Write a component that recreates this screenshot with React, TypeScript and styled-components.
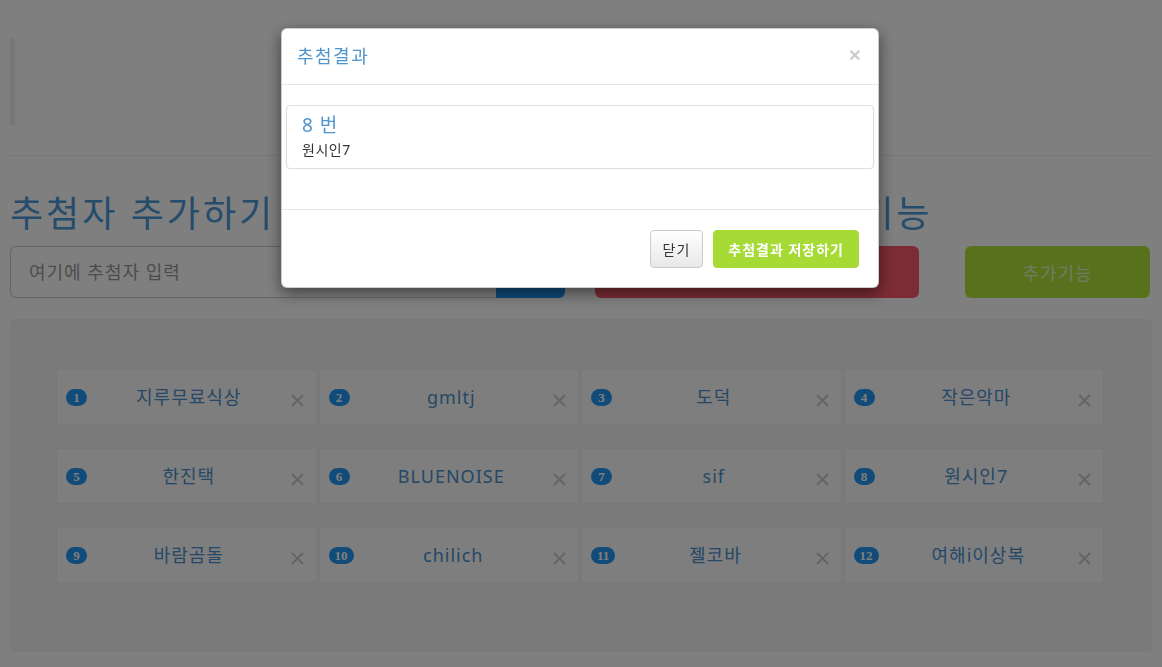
import styled, { createGlobalStyle } from "styled-components";

const GlobalStyle = createGlobalStyle`
  html, body {
    margin: 0;
    padding: 0;
    background: #fff;
    overflow: hidden;
  }

  * {
    box-sizing: border-box;
  }

  body {
    font-family: "Noto Sans", "Noto Sans CJK KR", sans-serif;
    color: #333;
  }
`;

const Page = styled.div`
  width: 1162px;
  height: 667px;
  padding: 38px 10px 0 10px;
`;

const Quote = styled.blockquote`
  margin: 0 0 30px 0;
  height: 87px;
  border-left: 5px solid #eee;
`;

const Rule = styled.hr`
  margin: 0 0 38px -2px;
  border: 0;
  border-top: 1px solid #eee;
`;

const TopRow = styled.div`
  display: flex;
  gap: 30px;
  margin-bottom: 21px;
`;

const Column = styled.div`
  width: 555px;
  display: flex;
  flex-direction: column;
`;

const Heading = styled.h1`
  margin: 0 0 12px 0;
  font-size: 36px;
  line-height: 40px;
  font-weight: 400;
  letter-spacing: 3px;
  color: #4a98d6;
  white-space: nowrap;
`;

const InputGroup = styled.div`
  display: flex;
  height: 52px;
`;

const NameInput = styled.input`
  flex: 1;
  height: 100%;
  padding: 0 18px;
  font-family: inherit;
  font-size: 18px;
  letter-spacing: 1px;
  border: 1px solid #ccc;
  border-right: 0;
  border-radius: 6px 0 0 6px;
  outline: none;

  &::placeholder {
    color: #999;
  }
`;

const AddButton = styled.button`
  width: 69px;
  height: 100%;
  border: 0;
  border-radius: 0 6px 6px 0;
  background: #2196f3;
  color: #fff;
  font-family: inherit;
  font-size: 18px;
`;

const ActionRow = styled.div`
  display: flex;
  justify-content: space-between;
  height: 52px;
`;

const ActionButton = styled.button<{ $tone: "red" | "green"; $w: number }>`
  width: ${(p) => p.$w}px;
  height: 100%;
  border: 0;
  border-radius: 6px;
  font-family: inherit;
  font-size: 18px;
  letter-spacing: 1px;
  background: ${(p) => (p.$tone === "red" ? "#f85868" : "#aee23a")};
  color: ${(p) => (p.$tone === "red" ? "#fff" : "rgba(255, 255, 255, 0.72)")};
`;

const Well = styled.div`
  width: 1142px;
  height: 333px;
  padding: 50px 0 0 46px;
  background: #f4f4f4;
  border-radius: 5px;
`;

const Grid = styled.div`
  width: 1048px;
  display: grid;
  grid-template-columns: repeat(4, 1fr);
  column-gap: 2px;
  row-gap: 23px;
`;

const Item = styled.div`
  height: 56px;
  display: flex;
  align-items: center;
  padding: 0 12px 0 9px;
  background: #fcfcfc;
  border: 1px solid #f0f0f0;
`;

const Badge = styled.span`
  display: inline-block;
  min-width: 21px;
  padding: 2px 6px;
  border-radius: 10px;
  background: #2196f3;
  color: #fff;
  font-family: "Liberation Serif", serif;
  font-weight: 700;
  font-size: 13px;
  line-height: 13px;
  text-align: center;
`;

const ItemName = styled.span`
  flex: 1;
  text-align: center;
  font-size: 18px;
  line-height: 24px;
  letter-spacing: 1px;
  color: #4a90cc;
`;

const RemoveIcon = styled.svg`
  width: 13px;
  height: 13px;
  margin-top: 6px;
  stroke: #c8c8c8;
  stroke-width: 2;
`;

const Backdrop = styled.div`
  position: fixed;
  inset: 0;
  background: rgba(0, 0, 0, 0.5);
`;

const Dialog = styled.div`
  position: absolute;
  top: 28px;
  left: 281px;
  width: 598px;
  background: #fff;
  border: 1px solid rgba(0, 0, 0, 0.2);
  border-radius: 6px;
  box-shadow: 0 5px 15px rgba(0, 0, 0, 0.5);
`;

const DialogHeader = styled.div`
  display: flex;
  justify-content: space-between;
  align-items: center;
  padding: 15px;
  border-bottom: 1px solid #e5e5e5;
`;

const DialogTitle = styled.h4`
  margin: 0;
  font-size: 18px;
  line-height: 25px;
  font-weight: 400;
  letter-spacing: 1.5px;
  color: #4f95cc;
`;

const CloseX = styled.span`
  margin: -4px 2px 0 0;
  font-family: "Liberation Sans", sans-serif;
  font-size: 21px;
  font-weight: 700;
  line-height: 1;
  color: #000;
  opacity: 0.2;
`;

const DialogBody = styled.div`
  padding: 20px 4px 40px;
`;

const ResultPanel = styled.div`
  padding: 8px 15px;
  border: 1px solid #ddd;
  border-radius: 4px;
`;

const ResultNumber = styled.div`
  font-size: 19px;
  line-height: 22px;
  letter-spacing: 1px;
  color: #4f95cc;
`;

const ResultName = styled.div`
  margin-top: 4px;
  font-size: 14px;
  line-height: 20px;
  letter-spacing: 0.5px;
  color: #333;
`;

const DialogFooter = styled.div`
  display: flex;
  justify-content: flex-end;
  gap: 10px;
  padding: 20px 19px 19px;
  border-top: 1px solid #e5e5e5;
`;

const FooterButton = styled.button<{ $primary?: boolean }>`
  height: 38px;
  padding: 0 ${(p) => (p.$primary ? 14 : 12)}px;
  border-radius: 4px;
  font-family: inherit;
  font-size: 14px;
  letter-spacing: 1px;
  border: 1px solid ${(p) => (p.$primary ? "#a6da34" : "#ccc")};
  background: ${(p) =>
    p.$primary ? "#a6da34" : "linear-gradient(#ffffff, #e8e8e8)"};
  color: ${(p) => (p.$primary ? "#fff" : "#333")};
  font-weight: ${(p) => (p.$primary ? 700 : 400)};
`;

const names = [
  "지루무료식상",
  "gmltj",
  "도덕",
  "작은악마",
  "한진택",
  "BLUENOISE",
  "sif",
  "원시인7",
  "바람곰돌",
  "chilich",
  "젤코바",
  "여해i이상복",
];

export default function App() {
  return (
    <>
      <GlobalStyle />
      <Page>
        <Quote />
        <Rule />
        <TopRow>
          <Column>
            <Heading>추첨자 추가하기</Heading>
            <InputGroup>
              <NameInput placeholder="여기에 추첨자 입력" />
              <AddButton>추가</AddButton>
            </InputGroup>
          </Column>
          <Column>
            <Heading>추첨하기와 추가기능</Heading>
            <ActionRow>
              <ActionButton $tone="red" $w={324}>
                추첨하기
              </ActionButton>
              <ActionButton $tone="green" $w={185}>
                추가기능
              </ActionButton>
            </ActionRow>
          </Column>
        </TopRow>
        <Well>
          <Grid>
            {names.map((name, i) => (
              <Item key={name}>
                <Badge>{i + 1}</Badge>
                <ItemName>{name}</ItemName>
                <RemoveIcon viewBox="0 0 13 13">
                  <line x1="1" y1="1" x2="12" y2="12" />
                  <line x1="12" y1="1" x2="1" y2="12" />
                </RemoveIcon>
              </Item>
            ))}
          </Grid>
        </Well>
      </Page>
      <Backdrop>
        <Dialog>
          <DialogHeader>
            <DialogTitle>추첨결과</DialogTitle>
            <CloseX>×</CloseX>
          </DialogHeader>
          <DialogBody>
            <ResultPanel>
              <ResultNumber>8 번</ResultNumber>
              <ResultName>원시인7</ResultName>
            </ResultPanel>
          </DialogBody>
          <DialogFooter>
            <FooterButton>닫기</FooterButton>
            <FooterButton $primary>추첨결과 저장하기</FooterButton>
          </DialogFooter>
        </Dialog>
      </Backdrop>
    </>
  );
}
